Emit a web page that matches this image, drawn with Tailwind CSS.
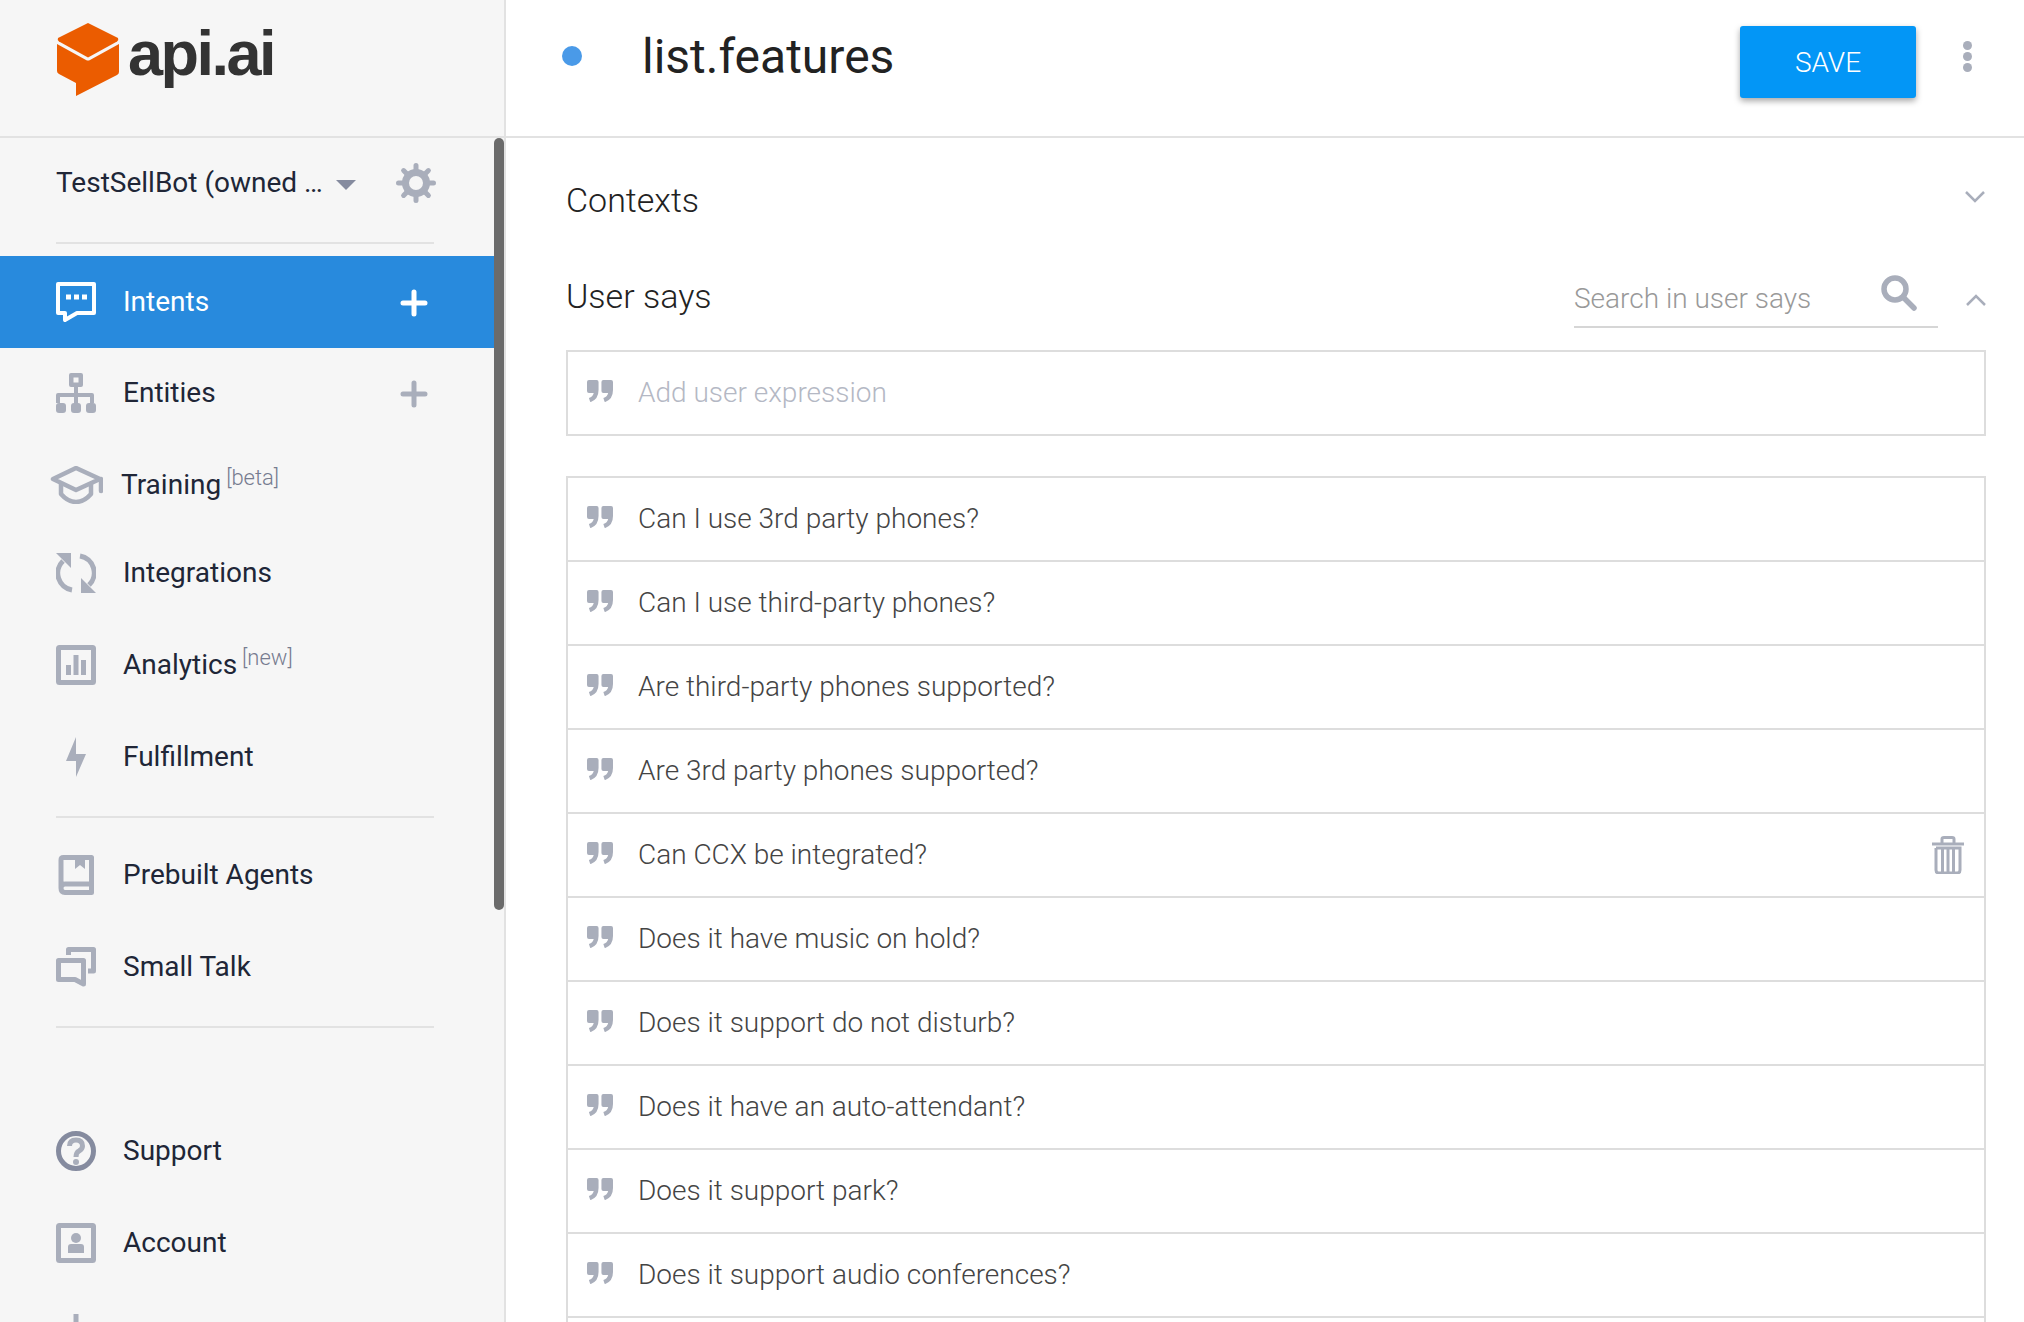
<!DOCTYPE html>
<html lang="en">
<head>
  <meta charset="UTF-8" />
  <title>api.ai - list.features</title>
  <script src="https://cdn.jsdelivr.net/npm/@tailwindcss/browser@4"></script>
</head>
<body class="h-screen overflow-hidden flex bg-white font-['Roboto',sans-serif] text-[#202637]">

  <!-- sidebar -->
  <aside class="w-[506px] shrink-0 h-full flex flex-col bg-[#f6f6f6] border-r-2 border-[#e2e2e2] overflow-hidden">
    <div class="h-[138px] shrink-0 border-b-2 border-[#e2e2e2] pl-[57px] pt-[23px] flex items-start gap-[9px]">
      <svg class="w-[62px] h-[73px] shrink-0" viewBox="0 0 62 73">
        <path d="M31 0 L61 15 Q62 17 60 18.500 L31 34.500 L2 18.500 Q0 17 1 15 Z" fill="#eb5c00"/>
        <path d="M0 21 L29 37 Q31 38 33 37 L62 21 V49 Q62 51 60 52 L19 73 V60 L2 51 Q0 50 0 48 Z" fill="#eb5c00"/>
      </svg>
      <span class="font-['Liberation_Sans',sans-serif] font-bold text-[63px] leading-[66px] tracking-[-2.5px] text-[#333333] -mt-[3px]">api.ai</span>
    </div>

    <div class="flex-1 pr-[10px] relative">
      <div class="absolute top-0 right-0 w-[10px] h-[772px] rounded-[5px] bg-[#6b6b6b]"></div>

      <div class="h-[106px] ml-[56px] mr-[60px] pb-[14px] flex items-center border-b-2 border-[#e2e2e2]">
        <span class="text-[28px] leading-none whitespace-nowrap w-[280px] shrink-0">TestSellBot (owned …</span>
        <svg class="w-[20px] h-[10px] mt-[3px] shrink-0" viewBox="0 0 20 10"><path d="M0 0H20L10 10Z" fill="#858b9f"/></svg>
        <svg class="w-[40px] h-[40px] ml-[40px] shrink-0" viewBox="0 0 40 40" fill="none" stroke="#a9aebb">
          <circle cx="20" cy="20" r="10.500" stroke-width="7"/>
          <path d="M20 2.500V8M20 32V37.500M2.500 20H8M32 20H37.500M7.600 7.600L11.500 11.500M28.500 28.500L32.400 32.400M32.400 7.600L28.500 11.500M11.500 28.500L7.600 32.400" stroke-width="5" stroke-linecap="round"/>
        </svg>
      </div>

      <nav class="mt-[12px]">
        <a class="h-[92px] flex items-center bg-[#288add] text-white text-[28px] pl-[56px]">
          <svg class="w-[40px] h-[40px] mr-[27px]" viewBox="0 0 40 40" fill="none" stroke="#fff" stroke-width="4" stroke-linejoin="round">
            <path d="M2 2H38V31H21L9 38V31H2Z"/>
            <path d="M10 15h5M18 15h5M26 15h5" stroke-width="5"/>
          </svg>
          <span class="flex-1">Intents</span>
          <svg class="w-[28px] h-[28px] mr-[66px] mt-[2px]" viewBox="0 0 28 28" stroke="#fff" stroke-width="5" stroke-linecap="round"><path d="M14 3V25M3 14H25"/></svg>
        </a>
        <a class="h-[92px] pb-[2px] flex items-center text-[28px] pl-[56px]">
          <svg class="w-[40px] h-[40px] mr-[27px]" viewBox="0 0 40 40" fill="#a9aebb">
            <path fill-rule="evenodd" d="M15 0h10q2 0 2 2v10q0 2-2 2h-3v6h14q2 0 2 2v8h-4v-6H22v6h-4v-6H4v6H0v-8q0-2 2-2h16v-6h-3q-2 0-2-2V2q0-2 2-2zm2.500 4.500v5h5v-5z"/>
            <rect x="0" y="30" width="10" height="10" rx="3"/><rect x="15" y="30" width="10" height="10" rx="3"/><rect x="30" y="30" width="10" height="10" rx="3"/>
          </svg>
          <span class="flex-1">Entities</span>
          <svg class="w-[28px] h-[28px] mr-[66px] mt-[2px]" viewBox="0 0 28 28" stroke="#a9aebb" stroke-width="5" stroke-linecap="round"><path d="M14 3V25M3 14H25"/></svg>
        </a>
        <a class="h-[92px] pb-[2px] flex items-center text-[28px] pl-[50px]">
          <svg class="w-[53px] h-[38px] mr-[18px]" viewBox="0 0 53 38" fill="none" stroke="#a9aebb" stroke-width="4.500" stroke-linejoin="round">
            <path d="M3 13L26 2L50 13L26 24Z"/>
            <path d="M11 18V28Q18 36 26 36Q34 36 41 28V18"/>
            <path d="M51 13V25" stroke-linecap="round"/>
          </svg>
          <span>Training</span><span class="text-[22px] font-light text-[#767c90] ml-[5px] -mt-[16px]">[beta]</span>
        </a>
        <a class="h-[82px] flex items-center text-[28px] pl-[56px]">
          <svg class="w-[40px] h-[40px] mr-[27px]" viewBox="0 0 40 40" fill="none" stroke="#a9aebb" stroke-width="5">
            <path d="M16 37A17 17 0 0 1 7 8"/>
            <path d="M24 3A17 17 0 0 1 33 32"/>
            <path d="M0 0H15V15Z" fill="#a9aebb" stroke="none"/>
            <path d="M40 40H25V25Z" fill="#a9aebb" stroke="none"/>
          </svg>
          <span>Integrations</span>
        </a>
        <a class="h-[92px] flex items-center text-[28px] pl-[56px] mt-[5px]">
          <svg class="w-[40px] h-[40px] mr-[27px]" viewBox="0 0 40 40" fill="none">
            <rect x="2.500" y="2.500" width="35" height="35" stroke="#a9aebb" stroke-width="5" rx="1"/>
            <path d="M10 20h5v10h-5zM17.500 10h5v20h-5zM25 15h5v15h-5z" fill="#a9aebb"/>
          </svg>
          <span>Analytics</span><span class="text-[22px] font-light text-[#767c90] ml-[5px] -mt-[16px]">[new]</span>
        </a>
        <a class="h-[92px] flex items-center text-[28px] pl-[56px]">
          <svg class="w-[40px] h-[40px] mr-[27px]" viewBox="0 0 40 40"><path d="M20 0L10 24H20V40L30 17H20Z" fill="#a9aebb"/></svg>
          <span>Fulfillment</span>
        </a>
      </nav>

      <div class="h-[2px] bg-[#e2e2e2] ml-[56px] mr-[60px] mt-[13px]"></div>

      <nav class="mt-[11px]">
        <a class="h-[92px] flex items-center text-[28px] pl-[56px]">
          <svg class="w-[40px] h-[40px] mr-[27px]" viewBox="0 0 40 40" fill="none" stroke="#a9aebb" stroke-width="5" stroke-linejoin="round">
            <path d="M5 33V5Q5 2.500 7.500 2.500H35.500V37.500H9Q5 37.500 5 33Q5 29 9 29H35.500"/>
            <path d="M19 2V14L24 10L29 14V2Z" fill="#a9aebb" stroke="none"/>
          </svg>
          <span>Prebuilt Agents</span>
        </a>
        <a class="h-[92px] flex items-center text-[28px] pl-[56px]">
          <svg class="w-[40px] h-[40px] mr-[27px]" viewBox="0 0 40 40" fill="none" stroke="#a9aebb" stroke-width="5" stroke-linejoin="round">
            <path d="M2.500 13.500H27.500V37L19 32.500H2.500Z"/>
            <path d="M12.500 8V2.500H37.500V24H32"/>
          </svg>
          <span>Small Talk</span>
        </a>
      </nav>

      <div class="h-[2px] bg-[#e2e2e2] ml-[56px] mr-[60px] mt-[13px]"></div>

      <nav class="mt-[77px]">
        <a class="h-[92px] flex items-center text-[28px] pl-[56px]">
          <svg class="w-[40px] h-[40px] mr-[27px]" viewBox="0 0 40 40" fill="none">
            <circle cx="20" cy="20" r="17.500" stroke="#858b9f" stroke-width="5"/>
            <path d="M13.500 15Q13.500 9 20 9Q26.500 9 26.500 15Q26.500 18 23 20Q20 21.500 20 26" stroke="#a9aebb" stroke-width="5"/>
            <circle cx="20" cy="31" r="3" fill="#a9aebb"/>
          </svg>
          <span>Support</span>
        </a>
        <a class="h-[92px] flex items-center text-[28px] pl-[56px]">
          <svg class="w-[40px] h-[40px] mr-[27px]" viewBox="0 0 40 40" fill="none">
            <rect x="2.500" y="2.500" width="35" height="35" stroke="#a9aebb" stroke-width="5" rx="1"/>
            <circle cx="20" cy="15" r="5" fill="#a9aebb"/>
            <path d="M12 30V24Q12 21 15 21H25Q28 21 28 24V30Z" fill="#a9aebb"/>
          </svg>
          <span>Account</span>
        </a>
        <div class="h-[92px] pl-[56px] pt-[25px]">
          <svg class="w-[40px] h-[40px]" viewBox="0 0 40 40" fill="none" stroke="#a9aebb" stroke-width="5"><path d="M20 0V20M10 8V14H30V8"/></svg>
        </div>
      </nav>
    </div>
  </aside>

  <!-- main -->
  <main class="flex-1 min-w-0 h-full flex flex-col overflow-hidden">
    <header class="h-[138px] shrink-0 border-b-2 border-[#e2e2e2] flex items-start">
      <span class="w-[20px] h-[20px] rounded-full bg-[#4a9ae8] ml-[56px] mt-[46px]"></span>
      <h1 class="ml-[60px] mt-[26px] text-[48px] leading-[62px] font-normal text-[#222222] flex-1">list.features</h1>
      <button class="w-[176px] h-[72px] mt-[26px] pt-[1px] rounded-[3px] bg-[#0396f6] text-white text-[28px] font-light shadow-[0_3px_6px_rgba(0,0,0,0.35)]">SAVE</button>
      <div class="w-[10px] ml-[47px] mr-[51px] mt-[41px] flex flex-col gap-[2px]">
        <span class="w-[9px] h-[9px] rounded-full bg-[#a9aebb]"></span>
        <span class="w-[9px] h-[9px] rounded-full bg-[#a9aebb]"></span>
        <span class="w-[9px] h-[9px] rounded-full bg-[#a9aebb]"></span>
      </div>
    </header>

    <section class="flex-1 pl-[60px] pr-[38px] overflow-hidden">
      <div class="h-[97px] flex items-center justify-between pt-[28px]">
        <h2 class="text-[34px] font-light text-[#222222]">Contexts</h2>
        <svg class="w-[20px] h-[12px] mr-[1px] -mt-[8px]" viewBox="0 0 20 12" fill="none" stroke="#a9aebb" stroke-width="2.500"><path d="M1 1L10 10L19 1"/></svg>
      </div>

      <div class="h-[97px] flex items-start">
        <h2 class="text-[34px] font-light text-[#222222] flex-1 mt-[39px] leading-[44px]">User says</h2>
        <div class="w-[364px] h-[59px] mt-[34px] border-b-2 border-[#d6d6d6] flex items-center justify-between pr-[21px]">
          <span class="text-[28px] font-light text-[#999999] mt-[2px]">Search in user says</span>
          <svg class="w-[36px] h-[36px] -mt-[10px]" viewBox="0 0 36 36" fill="none" stroke="#a9aebb" stroke-width="5.500"><circle cx="14" cy="14" r="11"/><path d="M22 22L33 33" stroke-linecap="round"/></svg>
        </div>
        <svg class="w-[20px] h-[12px] ml-[28px] mr-[0px] mt-[59px]" viewBox="0 0 20 12" fill="none" stroke="#a9aebb" stroke-width="2.500"><path d="M1 11L10 2L19 11"/></svg>
      </div>

      <div class="h-[86px] mt-[18px] border-2 border-[#dddddd] flex items-center pl-[19px]">
        <svg class="w-[26px] h-[22px] mr-[25px] -mt-[4px]" viewBox="0 0 27 22" preserveAspectRatio="none" fill="#a9aebb"><path d="M2 0h8q2 0 2 2v8q0 9-8 12q-1 0-1-1l-1-3q4-1 5-5H2q-2 0-2-2V2q0-2 2-2zM17 0h8q2 0 2 2v8q0 9-8 12q-1 0-1-1l-1-3q4-1 5-5H17q-2 0-2-2V2q0-2 2-2z"/></svg>
        <span class="text-[28px] font-light text-[#b4b8c4]">Add user expression</span>
      </div>

      <ul class="mt-[40px] border-2 border-b-0 border-[#dddddd] text-[28px] font-light text-[#444444]">
        <li class="h-[84px] border-b-2 border-[#dddddd] flex items-center pl-[19px]">
          <svg class="w-[26px] h-[22px] mr-[25px] -mt-[4px]" viewBox="0 0 27 22" preserveAspectRatio="none" fill="#a9aebb"><path d="M2 0h8q2 0 2 2v8q0 9-8 12q-1 0-1-1l-1-3q4-1 5-5H2q-2 0-2-2V2q0-2 2-2zM17 0h8q2 0 2 2v8q0 9-8 12q-1 0-1-1l-1-3q4-1 5-5H17q-2 0-2-2V2q0-2 2-2z"/></svg>
          <span>Can I use 3rd party phones?</span>
        </li>
        <li class="h-[84px] border-b-2 border-[#dddddd] flex items-center pl-[19px]">
          <svg class="w-[26px] h-[22px] mr-[25px] -mt-[4px]" viewBox="0 0 27 22" preserveAspectRatio="none" fill="#a9aebb"><path d="M2 0h8q2 0 2 2v8q0 9-8 12q-1 0-1-1l-1-3q4-1 5-5H2q-2 0-2-2V2q0-2 2-2zM17 0h8q2 0 2 2v8q0 9-8 12q-1 0-1-1l-1-3q4-1 5-5H17q-2 0-2-2V2q0-2 2-2z"/></svg>
          <span>Can I use third-party phones?</span>
        </li>
        <li class="h-[84px] border-b-2 border-[#dddddd] flex items-center pl-[19px]">
          <svg class="w-[26px] h-[22px] mr-[25px] -mt-[4px]" viewBox="0 0 27 22" preserveAspectRatio="none" fill="#a9aebb"><path d="M2 0h8q2 0 2 2v8q0 9-8 12q-1 0-1-1l-1-3q4-1 5-5H2q-2 0-2-2V2q0-2 2-2zM17 0h8q2 0 2 2v8q0 9-8 12q-1 0-1-1l-1-3q4-1 5-5H17q-2 0-2-2V2q0-2 2-2z"/></svg>
          <span>Are third-party phones supported?</span>
        </li>
        <li class="h-[84px] border-b-2 border-[#dddddd] flex items-center pl-[19px]">
          <svg class="w-[26px] h-[22px] mr-[25px] -mt-[4px]" viewBox="0 0 27 22" preserveAspectRatio="none" fill="#a9aebb"><path d="M2 0h8q2 0 2 2v8q0 9-8 12q-1 0-1-1l-1-3q4-1 5-5H2q-2 0-2-2V2q0-2 2-2zM17 0h8q2 0 2 2v8q0 9-8 12q-1 0-1-1l-1-3q4-1 5-5H17q-2 0-2-2V2q0-2 2-2z"/></svg>
          <span>Are 3rd party phones supported?</span>
        </li>
        <li class="h-[84px] border-b-2 border-[#dddddd] flex items-center pl-[19px]">
          <svg class="w-[26px] h-[22px] mr-[25px] -mt-[4px]" viewBox="0 0 27 22" preserveAspectRatio="none" fill="#a9aebb"><path d="M2 0h8q2 0 2 2v8q0 9-8 12q-1 0-1-1l-1-3q4-1 5-5H2q-2 0-2-2V2q0-2 2-2zM17 0h8q2 0 2 2v8q0 9-8 12q-1 0-1-1l-1-3q4-1 5-5H17q-2 0-2-2V2q0-2 2-2z"/></svg>
          <span class="flex-1">Can CCX be integrated?</span>
          <svg class="w-[32px] h-[38px] mr-[20px] -mt-[1px]" viewBox="0 0 32 38" fill="none" stroke="#a9aebb" stroke-width="3">
            <path d="M0 8H32"/>
            <path d="M10 7V3Q10 1.500 12 1.500H20Q22 1.500 22 3V7"/>
            <path d="M4 12V34Q4 37 7 37H25Q28 37 28 34V12H4"/>
            <path d="M10.500 12V36M16 12V36M21.500 12V36"/>
          </svg>
        </li>
        <li class="h-[84px] border-b-2 border-[#dddddd] flex items-center pl-[19px]">
          <svg class="w-[26px] h-[22px] mr-[25px] -mt-[4px]" viewBox="0 0 27 22" preserveAspectRatio="none" fill="#a9aebb"><path d="M2 0h8q2 0 2 2v8q0 9-8 12q-1 0-1-1l-1-3q4-1 5-5H2q-2 0-2-2V2q0-2 2-2zM17 0h8q2 0 2 2v8q0 9-8 12q-1 0-1-1l-1-3q4-1 5-5H17q-2 0-2-2V2q0-2 2-2z"/></svg>
          <span>Does it have music on hold?</span>
        </li>
        <li class="h-[84px] border-b-2 border-[#dddddd] flex items-center pl-[19px]">
          <svg class="w-[26px] h-[22px] mr-[25px] -mt-[4px]" viewBox="0 0 27 22" preserveAspectRatio="none" fill="#a9aebb"><path d="M2 0h8q2 0 2 2v8q0 9-8 12q-1 0-1-1l-1-3q4-1 5-5H2q-2 0-2-2V2q0-2 2-2zM17 0h8q2 0 2 2v8q0 9-8 12q-1 0-1-1l-1-3q4-1 5-5H17q-2 0-2-2V2q0-2 2-2z"/></svg>
          <span>Does it support do not disturb?</span>
        </li>
        <li class="h-[84px] border-b-2 border-[#dddddd] flex items-center pl-[19px]">
          <svg class="w-[26px] h-[22px] mr-[25px] -mt-[4px]" viewBox="0 0 27 22" preserveAspectRatio="none" fill="#a9aebb"><path d="M2 0h8q2 0 2 2v8q0 9-8 12q-1 0-1-1l-1-3q4-1 5-5H2q-2 0-2-2V2q0-2 2-2zM17 0h8q2 0 2 2v8q0 9-8 12q-1 0-1-1l-1-3q4-1 5-5H17q-2 0-2-2V2q0-2 2-2z"/></svg>
          <span>Does it have an auto-attendant?</span>
        </li>
        <li class="h-[84px] border-b-2 border-[#dddddd] flex items-center pl-[19px]">
          <svg class="w-[26px] h-[22px] mr-[25px] -mt-[4px]" viewBox="0 0 27 22" preserveAspectRatio="none" fill="#a9aebb"><path d="M2 0h8q2 0 2 2v8q0 9-8 12q-1 0-1-1l-1-3q4-1 5-5H2q-2 0-2-2V2q0-2 2-2zM17 0h8q2 0 2 2v8q0 9-8 12q-1 0-1-1l-1-3q4-1 5-5H17q-2 0-2-2V2q0-2 2-2z"/></svg>
          <span>Does it support park?</span>
        </li>
        <li class="h-[84px] border-b-2 border-[#dddddd] flex items-center pl-[19px]">
          <svg class="w-[26px] h-[22px] mr-[25px] -mt-[4px]" viewBox="0 0 27 22" preserveAspectRatio="none" fill="#a9aebb"><path d="M2 0h8q2 0 2 2v8q0 9-8 12q-1 0-1-1l-1-3q4-1 5-5H2q-2 0-2-2V2q0-2 2-2zM17 0h8q2 0 2 2v8q0 9-8 12q-1 0-1-1l-1-3q4-1 5-5H17q-2 0-2-2V2q0-2 2-2z"/></svg>
          <span>Does it support audio conferences?</span>
        </li>
        <li class="h-[84px]"></li>
      </ul>
    </section>
  </main>
</body>
</html>
